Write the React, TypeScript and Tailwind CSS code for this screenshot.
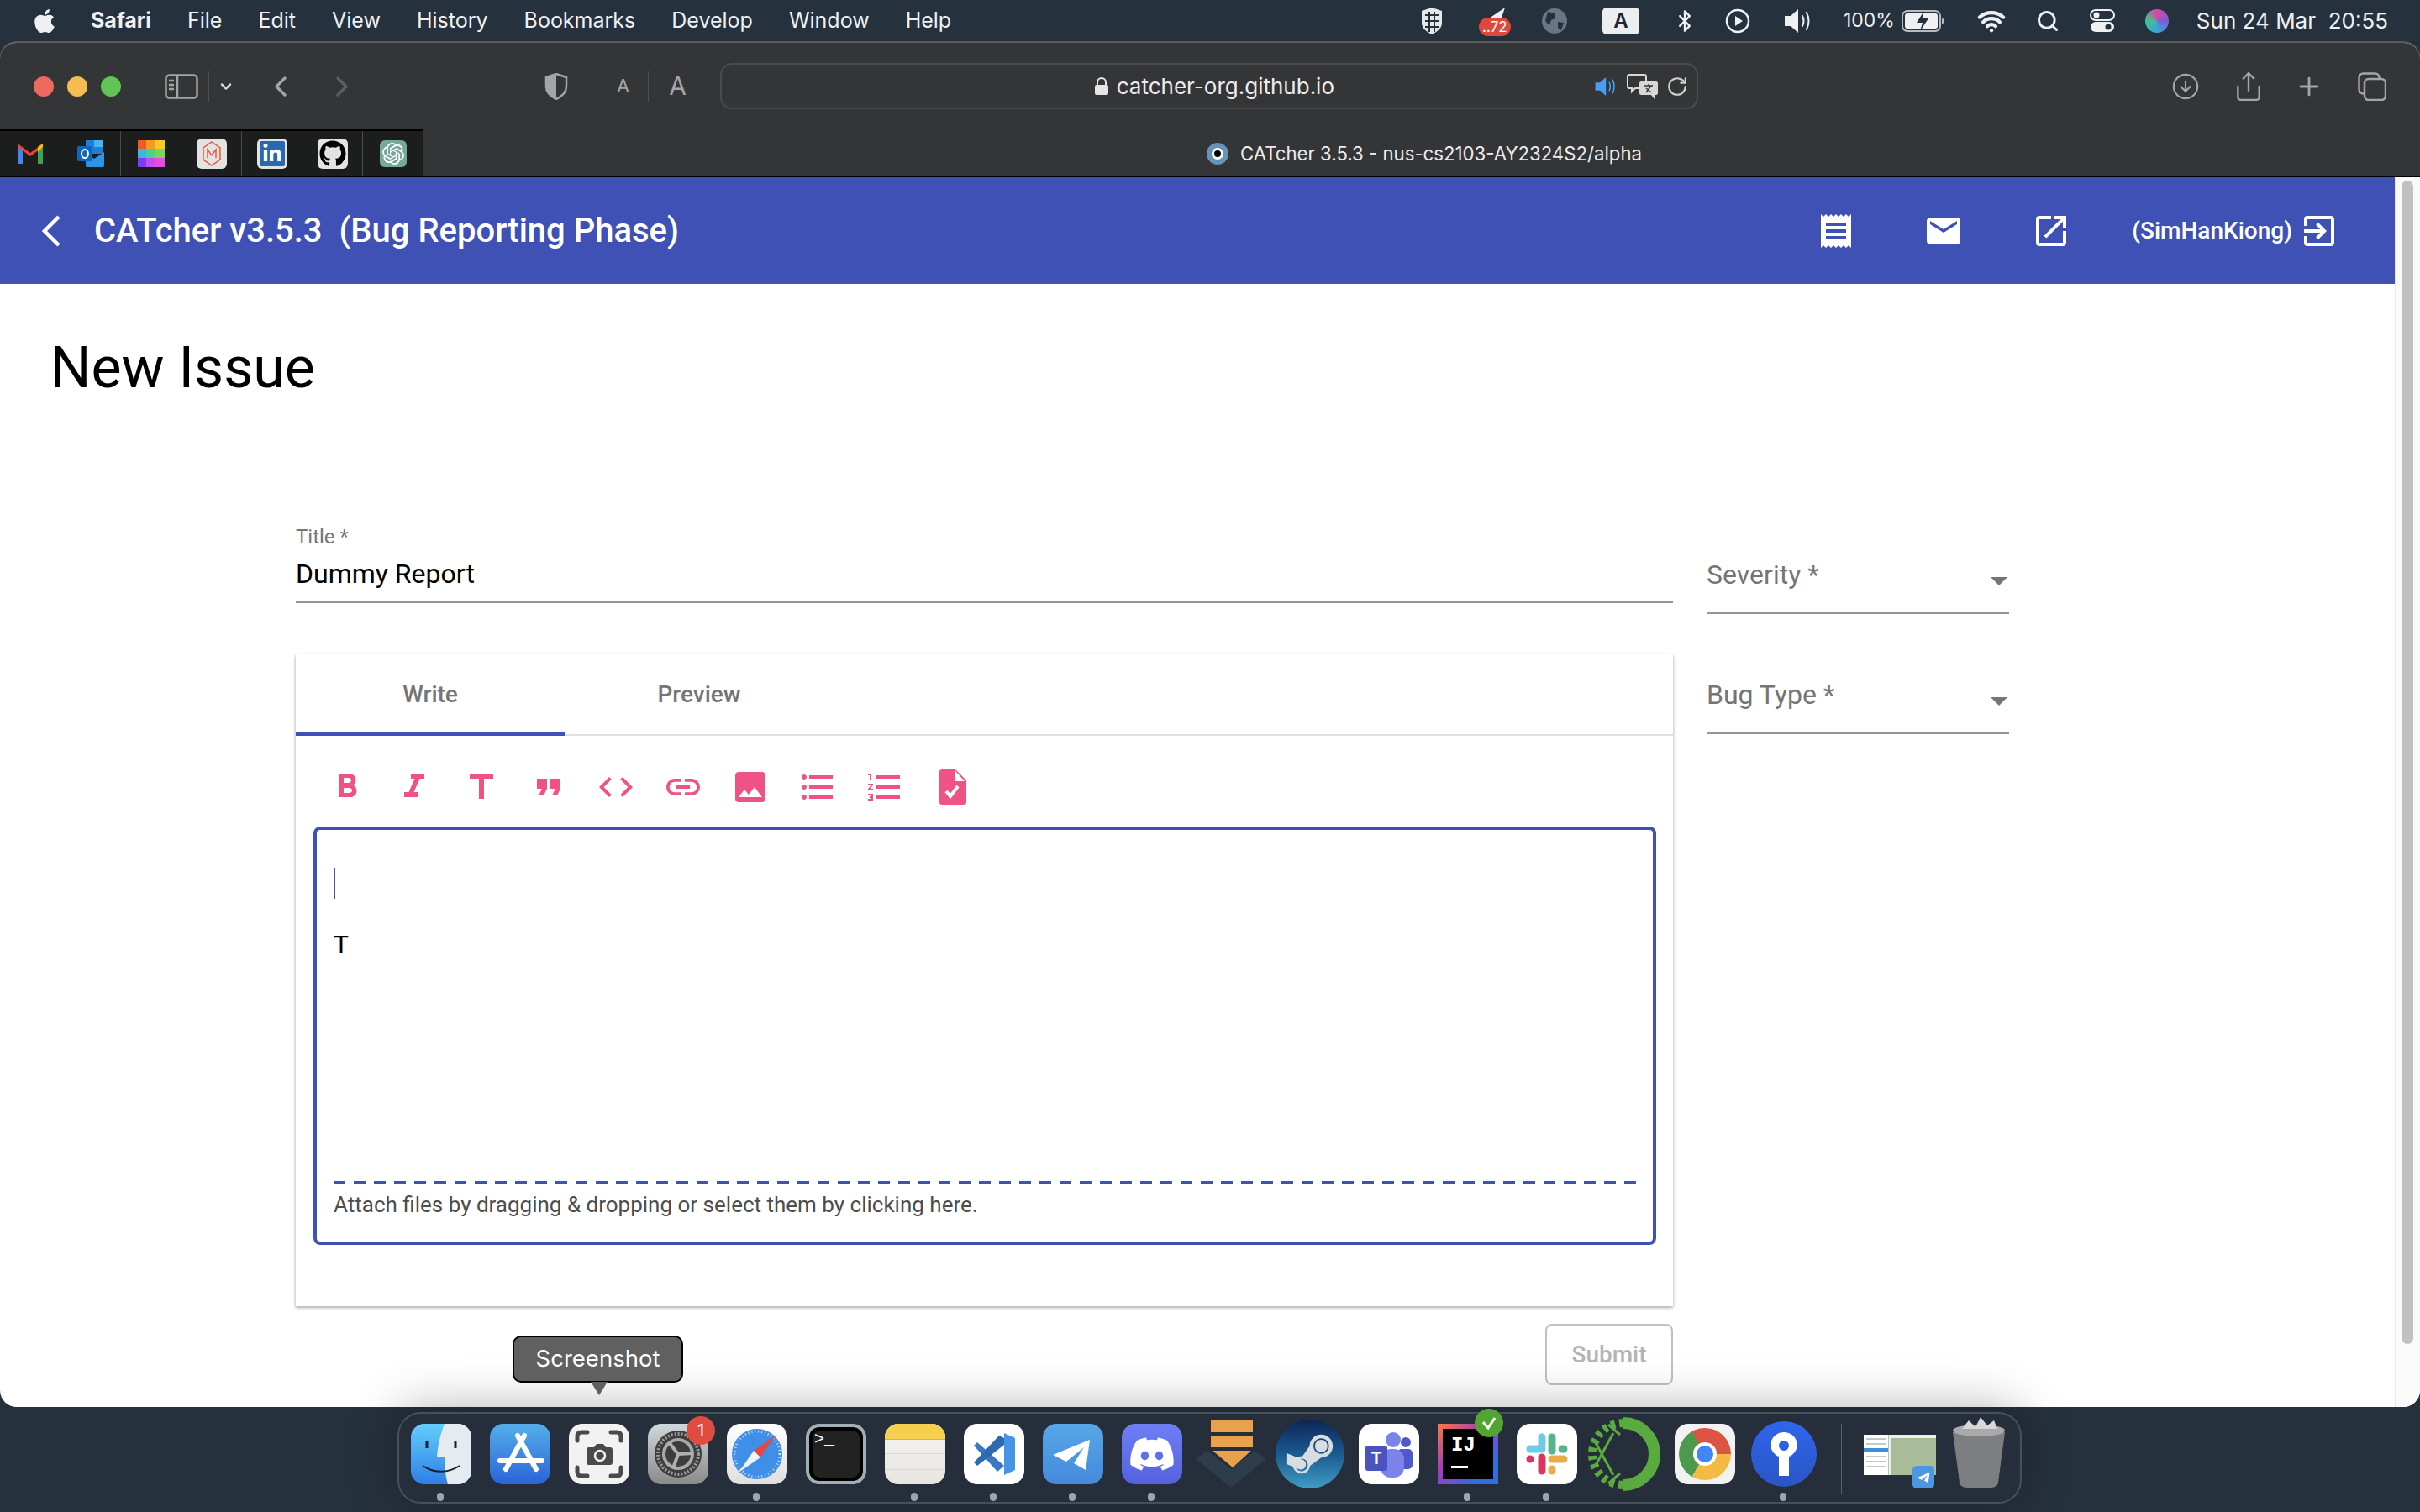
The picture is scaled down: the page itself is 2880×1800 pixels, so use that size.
import React from 'react';
import { FaApple, FaDiscord, FaGithub, FaSteamSymbol, FaLinkedinIn } from 'react-icons/fa';
import { SiOpenai } from 'react-icons/si';
import {
	MdReceipt,
	MdEmail,
	MdOpenInNew,
	MdExitToApp,
	MdFormatBold,
	MdFormatItalic,
	MdTitle,
	MdFormatQuote,
	MdCode,
	MdLink,
	MdImage,
	MdFormatListBulleted,
	MdFormatListNumbered,
	MdArrowDropDown,
} from 'react-icons/md';
import { Bluetooth, Search, Wifi, ChevronLeft, ChevronRight, ChevronDown, Plus, RotateCw, ArrowDownCircle, Share } from 'lucide-react';

const MENU = ['File', 'Edit', 'View', 'History', 'Bookmarks', 'Develop', 'Window', 'Help'];

const Speaker = ({ className, color }: { className: string; color: string }) => {
	return (
		<svg className={className} viewBox="0 0 38 34">
			<path d="M2 11h7l9-8v28l-9-8H2z" fill={color} />
			<path d="M23 11q3 6 0 12M28 7q5 10 0 20" fill="none" stroke={color} strokeWidth="2" strokeLinecap="round" />
		</svg>
	);
};

const MenuBar = () => {
	return (
		<div className="flex items-center h-[49px] shrink-0 text-[25px] text-[#eef0f2] font-[Inter,sans-serif]">
			<FaApple className="ml-[38px] w-[30px] h-[32px] text-[#eef0f2]" />
			<span className="ml-[40px] font-bold">Safari</span>
			<div className="flex ml-[43px] gap-[43px]">
				{MENU.map((m) => (
					<span key={m}>{m}</span>
				))}
			</div>
			<div className="flex items-center ml-auto">
				<svg className="w-[28px] h-[34px]" viewBox="0 0 28 34">
					<path d="M14 1l12 4v14c0 7-6 11-12 14C8 30 2 26 2 19V5z" fill="#e5e7e9" />
					<path d="M6 10h16M6 17h16M6 24h16M11 6v24M17 6v24" stroke="#26313e" strokeWidth="2" />
				</svg>
				<div className="relative ml-[42px] w-[36px] h-[36px]">
					<svg className="w-[30px] h-[20px] ml-[3px]" viewBox="0 0 30 20">
						<path d="M2 20L28 2l-6 18z" fill="#eef0f2" />
					</svg>
					<span className="absolute left-0 top-[14px] w-[38px] h-[22px] rounded-[11px] bg-[#e0483e] text-white text-[17px] leading-[22px] text-center">..72</span>
				</div>
				<svg className="ml-[38px] w-[32px] h-[32px]" viewBox="0 0 32 32">
					<circle cx="16" cy="16" r="15" fill="#6a7683" />
					<path d="M8 5l8 2 1 6-5 2-2 6-5-5zM20 17l7 1-3 9-4-3z" fill="#26313e" />
				</svg>
				<span className="ml-[41px] w-[44px] h-[32px] rounded-[5px] bg-[#ecedef] text-[#1d2630] font-semibold text-[24px] leading-[32px] text-center">A</span>
				<Bluetooth className="ml-[40px] w-[28px] h-[34px]" />
				<svg className="ml-[34px] w-[30px] h-[30px]" viewBox="0 0 30 30">
					<circle cx="15" cy="15" r="13" fill="none" stroke="#eef0f2" strokeWidth="2.5" />
					<path d="M12 9l9 6-9 6z" fill="#eef0f2" />
				</svg>
				<Speaker className="ml-[39px] w-[38px] h-[34px]" color="#eef0f2" />
				<span className="ml-[34px] text-[23px]">100%</span>
				<svg className="ml-[8px] w-[52px] h-[26px]" viewBox="0 0 52 26">
					<rect x="1" y="1" width="45" height="24" rx="6" fill="none" stroke="#b7bcc2" strokeWidth="2" />
					<rect x="4" y="4" width="39" height="18" rx="3" fill="#eef0f2" />
					<path d="M48 9c3 1 3 7 0 8z" fill="#b7bcc2" />
					<path d="M27 1l-9 14h7l-3 10 10-15h-7z" fill="#26313e" />
				</svg>
				<Wifi className="ml-[37px] w-[36px] h-[34px]" strokeWidth={3} />
				<Search className="ml-[35px] w-[28px] h-[30px]" strokeWidth={2.5} />
				<svg className="ml-[36px] w-[30px] h-[28px]" viewBox="0 0 30 28">
					<rect x="1" y="1" width="28" height="12" rx="6" fill="none" stroke="#eef0f2" strokeWidth="2" />
					<circle cx="8" cy="7" r="3.5" fill="#eef0f2" />
					<rect x="1" y="15" width="28" height="12" rx="6" fill="#eef0f2" />
					<circle cx="22" cy="21" r="3.5" fill="#26313e" />
				</svg>
				<div className="ml-[36px] w-[28px] h-[28px] rounded-full bg-[conic-gradient(#d946a8,#7a5cd6,#39a6d8,#42c08e,#d946a8)]"></div>
				<span className="ml-[33px] mr-[38px] text-[26px]">Sun 24 Mar&nbsp; 20:55</span>
			</div>
		</div>
	);
};

const Toolbar = () => {
	return (
		<div className="flex items-center h-[103px] text-[#a4a5a6]">
			<span className="ml-[40px] w-[24px] h-[24px] rounded-full bg-[#ee6a5f]"></span>
			<span className="ml-[16px] w-[24px] h-[24px] rounded-full bg-[#f5bd4f]"></span>
			<span className="ml-[16px] w-[24px] h-[24px] rounded-full bg-[#61c454]"></span>
			<svg className="ml-[52px] w-[40px] h-[30px]" viewBox="0 0 40 30">
				<rect x="1.5" y="1.5" width="37" height="27" rx="4" fill="none" stroke="#a4a5a6" strokeWidth="2.5" />
				<path d="M15 2v26M5 8h6M5 13h6M5 18h6" stroke="#a4a5a6" strokeWidth="2.5" />
			</svg>
			<span className="ml-[12px] w-px h-[38px] bg-[#4d4e50]"></span>
			<ChevronDown className="ml-[10px] w-[20px] h-[20px] text-[#d4d4d4]" strokeWidth={3} />
			<ChevronLeft className="ml-[35px] w-[40px] h-[40px]" strokeWidth={2} />
			<ChevronRight className="ml-[33px] w-[40px] h-[40px] text-[#5d5e60]" strokeWidth={2} />
			<svg className="ml-[221px] w-[28px] h-[32px]" viewBox="0 0 28 32">
				<path d="M14 1l12 4v11c0 7-6 12-12 15C8 28 2 23 2 16V5z" fill="none" stroke="#a4a5a6" strokeWidth="2.5" />
				<path d="M14 1L2 5v11c0 7 6 12 12 15z" fill="#a4a5a6" />
			</svg>
			<span className="ml-[58px] text-[22px] font-[Inter,sans-serif]">A</span>
			<span className="ml-[22px] w-px h-[38px] bg-[#4d4e50]"></span>
			<span className="ml-[24px] text-[30px] font-[Inter,sans-serif]">A</span>
			<div className="ml-[40px] relative flex items-center justify-center w-[1164px] h-[55px] rounded-[14px] border-2 border-[#4a4b4d] pl-[12px]">
				<svg className="w-[18px] h-[22px] mr-[9px]" viewBox="0 0 18 22">
					<path d="M4 10V6a5 5 0 0 1 10 0v4" fill="none" stroke="#e6e6e6" strokeWidth="2" />
					<rect x="1" y="9" width="16" height="12" rx="2" fill="#e6e6e6" />
				</svg>
				<span className="text-[26px] text-[#ececec] font-[Inter,sans-serif]">catcher-org.github.io</span>
				<div className="absolute right-[10px] top-[10px] flex items-center gap-[9px]">
					<Speaker className="w-[30px] h-[30px]" color="#4a9df2" />
					<svg className="w-[38px] h-[32px]" viewBox="0 0 38 32">
						<path d="M3 2h18a2 2 0 0 1 2 2v12a2 2 0 0 1-2 2H10l-4 4v-4H3a2 2 0 0 1-2-2V4a2 2 0 0 1 2-2z" fill="#343537" stroke="#d8d8d8" strokeWidth="2" />
						<path d="M17 10h18a2 2 0 0 1 2 2v12a2 2 0 0 1-2 2h-2v5l-4-5H17a2 2 0 0 1-2-2V12a2 2 0 0 1 2-2z" fill="#d8d8d8" />
						<path d="M21 15h10M26 13v2M23 23l6-8M29 23l-6-5" stroke="#343537" strokeWidth="1.5" fill="none" />
					</svg>
					<RotateCw className="w-[26px] h-[28px] text-[#d0d0d0]" />
				</div>
			</div>
			<ArrowDownCircle className="ml-[563px] w-[34px] h-[34px]" strokeWidth={1.5} />
			<Share className="ml-[39px] w-[38px] h-[40px]" strokeWidth={1.5} />
			<Plus className="ml-[36px] w-[34px] h-[34px]" strokeWidth={2} />
			<svg className="ml-[41px] w-[34px] h-[34px]" viewBox="0 0 34 34">
				<rect x="1.5" y="1.5" width="24" height="24" rx="5" fill="none" stroke="#a4a5a6" strokeWidth="2.5" />
				<rect x="8" y="8" width="25" height="25" rx="5" fill="#343537" stroke="#a4a5a6" strokeWidth="2.5" />
			</svg>
		</div>
	);
};

const Fav = ({ children }: { children: React.ReactNode }) => {
	return <div className="flex items-center justify-center w-[72px] h-full border-r border-[#4a4b4d] shrink-0">{children}</div>;
};

const TabRow = () => {
	return (
		<div className="flex h-[55px] relative">
			<div className="flex w-[504px] h-full bg-[#1c1e1e] border-t-2 border-black shrink-0">
				<Fav>
					<svg className="w-[30px] h-[24px]" viewBox="0 0 30 24">
						<path d="M0 24V4h6v20z" fill="#4285f4" />
						<path d="M24 24V4h6v20z" fill="#34a853" />
						<path d="M0 4l15 11L30 4v-4l-15 11L0 0z" fill="#ea4335" />
						<path d="M24 4l6-4v4l-6 6z" fill="#fbbc04" />
					</svg>
				</Fav>
				<Fav>
					<svg className="w-[32px] h-[32px]" viewBox="0 0 32 32">
						<path d="M10 0h20v16H10z" fill="#1f7fd8" />
						<path d="M20 0h10v8H20z" fill="#49b5ee" />
						<path d="M10 14l10 8 12-8v16a2 2 0 0 1-2 2H12a2 2 0 0 1-2-2z" fill="#2d95e6" />
						<rect x="0" y="7" width="18" height="18" rx="2" fill="#0f66bd" />
						<ellipse cx="9" cy="16" rx="4" ry="5" fill="none" stroke="#fff" strokeWidth="2" />
					</svg>
				</Fav>
				<Fav>
					<div className="grid grid-cols-3 w-[32px] h-[32px]">
						<span className="bg-[#ef5a24]"></span>
						<span className="bg-[#f59a23]"></span>
						<span className="bg-[#f7ca2a]"></span>
						<span className="bg-[#3cb5ef]"></span>
						<span className="bg-[#4cd08a]"></span>
						<span className="bg-[#7bd45e]"></span>
						<span className="bg-[#7a3ff0]"></span>
						<span className="bg-[#c74cf0]"></span>
						<span className="bg-[#e84cdc]"></span>
					</div>
				</Fav>
				<Fav>
					<div className="flex items-center justify-center w-[36px] h-[36px] rounded-[6px] bg-[#e3e3e3]">
						<svg className="w-[24px] h-[30px]" viewBox="0 0 24 30">
							<path d="M12 1l10 7v14l-10 7L2 22V8z" fill="none" stroke="#ea5a3e" strokeWidth="1.5" />
							<path d="M7 20V10l5 7 5-7v10" fill="none" stroke="#ea5a3e" strokeWidth="1.5" />
						</svg>
					</div>
				</Fav>
				<Fav>
					<div className="flex items-center justify-center w-[36px] h-[36px] rounded-[6px] bg-[#e3e3e3]">
						<div className="flex items-center justify-center w-[30px] h-[30px] rounded-[2px] bg-[#2a67b2]">
							<FaLinkedinIn className="w-[24px] h-[24px] text-white" />
						</div>
					</div>
				</Fav>
				<Fav>
					<div className="flex items-center justify-center w-[36px] h-[36px] rounded-[6px] bg-[#e3e3e3]">
						<FaGithub className="w-[32px] h-[32px] text-black" />
					</div>
				</Fav>
				<Fav>
					<div className="flex items-center justify-center w-[32px] h-[32px] rounded-[6px] bg-[#75a99b]">
						<SiOpenai className="w-[26px] h-[26px] text-white" />
					</div>
				</Fav>
			</div>
			<div className="flex items-center ml-[932px] gap-[14px] pt-[3px] text-[22.2px] text-[#ececec] font-[Inter,sans-serif]">
				<div className="flex items-center justify-center w-[26px] h-[26px] rounded-full bg-[#6793b8]">
					<div className="w-[14px] h-[14px] rounded-full border-[3px] border-white bg-black"></div>
				</div>
				<span>CATcher 3.5.3 - nus-cs2103-AY2324S2/alpha</span>
			</div>
		</div>
	);
};

const TOOLS = [MdFormatBold, MdFormatItalic, MdTitle, MdFormatQuote, MdCode, MdLink, MdImage, MdFormatListBulleted, MdFormatListNumbered];

const SelectField = ({ label }: { label: string }) => {
	return (
		<div className="flex items-center justify-between h-[79px] border-b-2 border-[#949494] pb-[13px]">
			<span className="text-[32px] text-[#757575]">{label}</span>
			<MdArrowDropDown className="w-[48px] h-[48px] text-[#757575] -mr-[12px] mt-[14px]" />
		</div>
	);
};

const IssueForm = () => {
	return (
		<div className="flex gap-[40px] pl-[352px] mt-[145px]">
			<div className="flex flex-col w-[1639px]">
				<span className="text-[24px] leading-[28px] text-[#757575]">Title *</span>
				<div className="h-[65px] border-b-2 border-[#949494] text-[32px] leading-[60px] text-black">Dummy Report</div>
				<div className="flex flex-col h-[776px] mt-[61px] bg-white shadow-[0_2px_4px_rgba(0,0,0,0.3),0_0_3px_rgba(0,0,0,0.1)]">
					<div className="flex h-[97px] border-b-2 border-[#e0e0e0]">
						<div className="flex items-center justify-center w-[320px] h-[97px] border-b-[4px] border-[#3f51b5] text-[28px] font-medium text-[#757575] pt-[2px]">Write</div>
						<div className="flex items-center justify-center w-[320px] h-[95px] text-[28px] font-medium text-[#757575]">Preview</div>
					</div>
					<div className="flex items-center h-[108px] pl-[37px] pt-[14px] gap-[32px] text-[#ef5285]">
						{TOOLS.map((Icon, i) => (
							<Icon key={i} className="w-[48px] h-[48px] shrink-0" />
						))}
						<svg className="w-[48px] h-[48px] shrink-0" viewBox="0 0 24 24">
							<path d="M6 1.500h8l6.500 6.500v13a1.500 1.500 0 0 1-1.500 1.500H6A1.500 1.500 0 0 1 4.500 21V3A1.500 1.500 0 0 1 6 1.500z" fill="#ef5285" />
							<path d="M14 2.500V8.500h5.500z" fill="#fff" />
							<path d="M8.500 14.500l2.500 3 4.500-6" fill="none" stroke="#fff" strokeWidth="2" />
						</svg>
					</div>
					<div className="flex flex-col w-[1598px] h-[498px] ml-[21px] rounded-[8px] border-[4px] border-[#3f51b5] px-[20px] bg-white">
						<div className="w-[2px] h-[37px] mt-[45px] bg-[#3f51b5]"></div>
						<span className="mt-[35px] text-[30px] leading-[40px] text-black">T</span>
						<div className="mt-auto h-[3px] bg-[repeating-linear-gradient(90deg,#3f51b5_0_14px,transparent_14px_24px)]"></div>
						<div className="h-[69px] text-[26px] leading-[50px] text-[#4d4d4d]">Attach files by dragging &amp; dropping or select them by clicking here.</div>
					</div>
				</div>
				<button className="self-end w-[152px] h-[73px] mt-[21px] rounded-[8px] border-2 border-[#c0c0c0] text-[28px] font-medium text-[#b4b4b4]">Submit</button>
			</div>
			<div className="flex flex-col w-[360px] gap-[64px] pt-[27px]">
				<SelectField label="Severity *" />
				<SelectField label="Bug Type *" />
			</div>
		</div>
	);
};

const BrowserWindow = () => {
	return (
		<div className="flex flex-col h-[1626px] shrink-0 rounded-[20px] overflow-hidden bg-white border-t-2 border-[#5b5c5e] font-[Roboto,sans-serif]">
			<div className="flex flex-col shrink-0 bg-[#343537] border-b-2 border-black">
				<Toolbar />
				<TabRow />
			</div>
			<div className="flex flex-1 min-h-0">
				<div className="flex flex-col flex-1 min-w-0 overflow-hidden">
					<div className="flex items-center h-[127px] shrink-0 bg-[#3f51b5] text-white">
						<svg className="ml-[48px] w-[26px] h-[40px]" viewBox="0 0 26 40">
							<path d="M22 3L5 20l17 17" fill="none" stroke="#fff" strokeWidth="4.500" />
						</svg>
						<span className="ml-[38px] text-[40px] font-medium whitespace-pre">CATcher v3.5.3  (Bug Reporting Phase)</span>
						<MdReceipt className="ml-auto w-[48px] h-[48px]" />
						<MdEmail className="ml-[80px] w-[48px] h-[48px]" />
						<MdOpenInNew className="ml-[80px] w-[48px] h-[48px]" />
						<span className="ml-[72px] text-[28px] font-medium">(SimHanKiong)</span>
						<MdExitToApp className="ml-[8px] mr-[66px] w-[48px] h-[48px]" />
					</div>
					<h1 className="mt-[58px] ml-[60px] text-[68px] leading-[84px] text-black">New Issue</h1>
					<IssueForm />
				</div>
				<div className="w-[30px] shrink-0 bg-[#fafafa] border-l border-[#e8e8e8] pl-[7px] pt-[4px]">
					<div className="w-[14px] h-[1385px] rounded-[7px] bg-[#c1c1c1]"></div>
				</div>
			</div>
		</div>
	);
};

const Tile = ({ dot, children }: { dot?: boolean; children: React.ReactNode }) => {
	return (
		<div className="relative flex items-center justify-center w-[72px] h-[72px] shrink-0">
			{children}
			{dot && <span className="absolute left-[31px] top-[82px] w-[8px] h-[10px] rounded-full bg-[#9aa5b3]"></span>}
		</div>
	);
};

const Dock = () => {
	return (
		<div className="relative z-10 flex items-start w-[1933px] h-[109px] mt-[6px] ml-[473px] pl-[14px] pt-[12px] gap-[22px] rounded-[28px] border-2 border-[#46505b] bg-[#252e3a] shadow-[0_-4px_60px_rgba(0,0,0,0.3)] font-[Inter,sans-serif]">
			<Tile dot>
				<div className="relative w-[72px] h-[72px] rounded-[16px] overflow-hidden bg-[linear-gradient(180deg,#63cdfb,#2f7fe6)]">
					<svg className="absolute inset-0" viewBox="0 0 72 72">
						<path d="M40 0h32v72H44c-3-10-4-20-3-32H31C32 24 36 10 40 0z" fill="#e6ebf1" />
						<path d="M14 50c14 9 30 9 44 0" fill="none" stroke="#15202b" strokeWidth="2" />
						<path d="M19 21v8M53 21v8" stroke="#15202b" strokeWidth="3" />
					</svg>
				</div>
			</Tile>
			<Tile>
				<svg className="w-[72px] h-[72px] rounded-[16px] bg-[linear-gradient(180deg,#55aeea,#2a64d8)]" viewBox="0 0 72 72">
					<path d="M33 14l22 40M41 14L19 54M12 44h50" stroke="#fff" strokeWidth="6" strokeLinecap="round" fill="none" />
				</svg>
			</Tile>
			<Tile>
				<div className="relative">
					<svg className="w-[72px] h-[72px] rounded-[16px] bg-[#f2f2f2]" viewBox="0 0 72 72">
						<path d="M10 20v-5q0-5 5-5h7M50 10h7q5 0 5 5v5M62 52v5q0 5-5 5h-7M22 62h-7q-5 0-5-5v-5" fill="none" stroke="#4a4a4a" strokeWidth="5" strokeLinecap="round" />
						<path d="M24 28h6l3-4h8l3 4h5a3 3 0 0 1 3 3v15a3 3 0 0 1-3 3H24a3 3 0 0 1-3-3V31a3 3 0 0 1 3-3z" fill="#4a4a4a" />
						<circle cx="37" cy="38" r="6" fill="none" stroke="#eee" strokeWidth="2.500" />
					</svg>
					<div className="absolute left-[-67px] top-[-105px] w-[203px] h-[56px] rounded-[10px] border-2 border-black bg-[#606060] text-white text-[27.5px] leading-[50px] text-center">Screenshot</div>
					<div className="absolute left-[26px] top-[-50px] w-0 h-0 border-x-[10px] border-x-transparent border-t-[16px] border-t-[#606060]"></div>
				</div>
			</Tile>
			<Tile>
				<div className="relative">
					<svg className="w-[72px] h-[72px] rounded-[16px] bg-[linear-gradient(180deg,#cfd8dc,#8a8a8a)]" viewBox="0 0 72 72">
						<circle cx="36" cy="36" r="28" fill="#3d3d3d" />
						<circle cx="36" cy="36" r="24" fill="none" stroke="#9a9a9a" strokeWidth="4" strokeDasharray="2 2" />
						<circle cx="36" cy="36" r="17" fill="none" stroke="#a8a8a8" strokeWidth="4" />
						<path d="M36 36L25 22M36 36l18-1M36 36l-6 17" stroke="#b0b0b0" strokeWidth="4" />
					</svg>
					<span className="absolute right-[-8px] top-[-9px] w-[34px] h-[34px] rounded-full bg-[#df4c40] text-white text-[20px] leading-[34px] text-center">1</span>
				</div>
			</Tile>
			<Tile dot>
				<svg className="w-[72px] h-[72px] rounded-[16px] bg-[linear-gradient(180deg,#ffffff,#dfdfdf)]" viewBox="0 0 72 72">
					<circle cx="36" cy="36" r="30" fill="#3f8ee8" />
					<circle cx="36" cy="36" r="27" fill="none" stroke="#cfe4fa" strokeWidth="3" strokeDasharray="1 3" />
					<path d="M58 14L32 32l8 8z" fill="#e5483c" />
					<path d="M14 58l18-26 8 8z" fill="#f2f2f2" />
				</svg>
			</Tile>
			<Tile>
				<div className="flex flex-col w-[72px] h-[72px] rounded-[16px] border-[4px] border-[#9fb0b5] bg-black p-[4px]">
					<div className="flex flex-1 items-start rounded-[9px] bg-[#222222] text-white text-[20px] leading-[22px] font-[Liberation_Mono,monospace] pl-[2px]">&gt;_</div>
				</div>
			</Tile>
			<Tile dot>
				<div className="flex flex-col w-[72px] h-[72px] rounded-[16px] overflow-hidden bg-[linear-gradient(180deg,#f5f4f2,#e7e5e0)]">
					<div className="h-[19px] bg-[#f6cf4c] border-b border-[#c9b36a]"></div>
					<div className="h-px mt-[16px] bg-[#d8d8d6]"></div>
					<div className="h-px mt-[18px] bg-[#d8d8d6]"></div>
				</div>
			</Tile>
			<Tile dot>
				<svg className="w-[72px] h-[72px] rounded-[16px] bg-white" viewBox="0 0 72 72">
					<path d="M12 26l4-4 32 28-8 7z" fill="#3a78c4" />
					<path d="M16 50l-4-4 30-32 6 3v8z" fill="#2f69b1" />
					<path d="M48 11l13 6v38l-13 6z" fill="#4595e6" />
				</svg>
			</Tile>
			<Tile dot>
				<svg className="w-[72px] h-[72px] rounded-[16px] bg-[linear-gradient(180deg,#55a8e8,#4689dc)]" viewBox="0 0 72 72">
					<path d="M12 37l44-18-5 36-14-8 12-19-21 17z" fill="#fff" />
				</svg>
			</Tile>
			<Tile dot>
				<div className="flex items-center justify-center w-[72px] h-[72px] rounded-[16px] bg-[linear-gradient(180deg,#6f7df5,#5462e0)]">
					<FaDiscord className="w-[56px] h-[56px] text-white" />
				</div>
			</Tile>
			<Tile>
				<svg className="w-[88px] h-[80px] shrink-0" viewBox="0 0 88 80">
					<path d="M2 46l42 34 42-34-14-10-28 22-28-22z" fill="#2f3c4b" />
					<path d="M20 0h50v14H20zM20 18h50v14H20zM22 36h46L46 56z" fill="#e9a24a" />
				</svg>
			</Tile>
			<Tile>
				<div className="flex items-center justify-center w-[82px] h-[82px] shrink-0 rounded-full bg-[linear-gradient(180deg,#0d2457,#1a5b90,#3f9cc4)]">
					<FaSteamSymbol className="w-[62px] h-[62px] text-[#d8dde2]" />
				</div>
			</Tile>
			<Tile>
				<div className="relative w-[72px] h-[72px] rounded-[16px] bg-white">
					<span className="absolute left-[32px] top-[10px] w-[18px] h-[18px] rounded-full bg-[#7b83eb]"></span>
					<span className="absolute left-[50px] top-[16px] w-[12px] h-[12px] rounded-full bg-[#5059c9]"></span>
					<span className="absolute left-[46px] top-[30px] w-[18px] h-[24px] rounded-[5px] bg-[#5059c9]"></span>
					<span className="absolute left-[26px] top-[30px] w-[28px] h-[34px] rounded-[12px] bg-[#7b83eb]"></span>
					<span className="absolute left-[8px] top-[26px] w-[26px] h-[30px] rounded-[3px] bg-[#4b53bc] text-white text-[20px] leading-[30px] text-center font-bold">T</span>
				</div>
			</Tile>
			<Tile dot>
				<div className="relative w-[72px] h-[72px] shrink-0 bg-[linear-gradient(135deg,#fe7a3c,#a23bbd_40%,#2d6fe0_80%)] p-[6px]">
					<div className="flex flex-col w-full h-full bg-black text-white px-[10px] pt-[8px] font-[Liberation_Mono,monospace]">
						<span className="text-[24px] leading-[24px] font-bold">IJ</span>
						<span className="mt-[12px] w-[20px] h-[3px] bg-white"></span>
					</div>
					<span className="absolute right-[-6px] top-[-18px] flex items-center justify-center w-[34px] h-[34px] rounded-full bg-[#53a532]">
						<svg className="w-[20px] h-[20px]" viewBox="0 0 20 20">
							<path d="M3 9l6 7 8-12" fill="none" stroke="#fff" strokeWidth="3" />
						</svg>
					</span>
				</div>
			</Tile>
			<Tile dot>
				<svg className="w-[72px] h-[72px] rounded-[16px] bg-white" viewBox="0 0 72 72">
					<g strokeWidth="9" strokeLinecap="round">
						<path d="M30 16v10M16 30h14" stroke="#6ecbe8" />
						<path d="M42 16v16M56 30h-2" stroke="#53b58b" />
						<path d="M42 56v-2M42 42h14" stroke="#e5ae47" />
						<path d="M30 40v16M16 42h0" stroke="#d9375e" />
					</g>
				</svg>
			</Tile>
			<Tile>
				<svg className="w-[90px] h-[90px] shrink-0" viewBox="0 0 90 90">
					<path d="M42 8a37 37 0 1 1 0 74" fill="none" stroke="#5aab3d" strokeWidth="14" />
					<path d="M42 8a37 37 0 0 0 0 74" fill="none" stroke="#5aab3d" strokeWidth="10" strokeDasharray="5 5" />
					<path d="M8 30l22 40M8 60l22-40M24 10l14 12M24 80l14-12" stroke="#5aab3d" strokeWidth="3" fill="none" />
				</svg>
			</Tile>
			<Tile>
				<div className="flex items-center justify-center w-[72px] h-[72px] rounded-[16px] bg-[#f2f2f2]">
					<div className="flex items-center justify-center w-[62px] h-[62px] rounded-full bg-[conic-gradient(from_-30deg,#dc5442_0deg_120deg,#f3bb42_120deg_240deg,#4d9a4f_240deg_360deg)]">
						<div className="w-[28px] h-[28px] rounded-full border-[4px] border-white bg-[#4285f4]"></div>
					</div>
				</div>
			</Tile>
			<Tile dot>
				<div className="flex items-center justify-center w-[78px] h-[78px] shrink-0 rounded-full bg-[linear-gradient(180deg,#2f66ec,#2a55c4)]">
					<svg className="w-[30px] h-[52px]" viewBox="0 0 30 52">
						<path d="M15 0a15 15 0 0 1 6 29v23H9V29A15 15 0 0 1 15 0z" fill="#fff" />
						<circle cx="15" cy="16" r="6" fill="#2f62dd" />
					</svg>
				</div>
			</Tile>
			<span className="w-px h-[84px] ml-[10px] bg-[#58626d] shrink-0"></span>
			<div className="relative w-[86px] h-[48px] ml-[4px] mt-[13px] shrink-0 bg-[#eef0ea]">
				<div className="absolute left-0 top-0 flex flex-col gap-[4px] w-[30px] h-[48px] bg-white border-r border-[#b9c2cc] pt-[4px]">
					<div className="h-[2px] mx-[3px] bg-[#c4c8cc]"></div>
					<div className="h-[2px] mx-[3px] bg-[#c4c8cc]"></div>
					<div className="h-[5px] bg-[#3f8ed8]"></div>
					<div className="h-[2px] mx-[3px] bg-[#c4c8cc]"></div>
					<div className="h-[2px] mx-[3px] bg-[#c4c8cc]"></div>
					<div className="h-[2px] mx-[3px] bg-[#c4c8cc]"></div>
				</div>
				<div className="absolute left-[32px] top-[4px] w-[54px] h-[44px] bg-[#a8bc9a]"></div>
				<div className="absolute right-[2px] bottom-[-16px] flex items-center justify-center w-[26px] h-[27px] rounded-[5px] bg-[#4b97e0]">
					<svg className="w-[18px] h-[18px]" viewBox="0 0 72 72">
						<path d="M6 37l60-26-7 50-19-11 16-26-28 23z" fill="#fff" />
					</svg>
				</div>
			</div>
			<svg className="w-[64px] h-[84px] -mt-[8px] -ml-[3px] shrink-0" viewBox="0 0 64 84">
				<path d="M1 18h62l-8 60q-1 6-10 6H19q-9 0-10-6z" fill="#7c7e80" />
				<ellipse cx="32" cy="16" rx="31" ry="7" fill="#a8aaac" />
				<path d="M12 14l8-10 8 8 6-12 8 10 8-6 4 10z" fill="#d8d8d8" />
			</svg>
		</div>
	);
};

const App = () => {
	return (
		<div className="flex flex-col w-[2880px] h-[1800px] overflow-hidden bg-[#26313e]">
			<MenuBar />
			<BrowserWindow />
			<Dock />
		</div>
	);
};

export default App;
